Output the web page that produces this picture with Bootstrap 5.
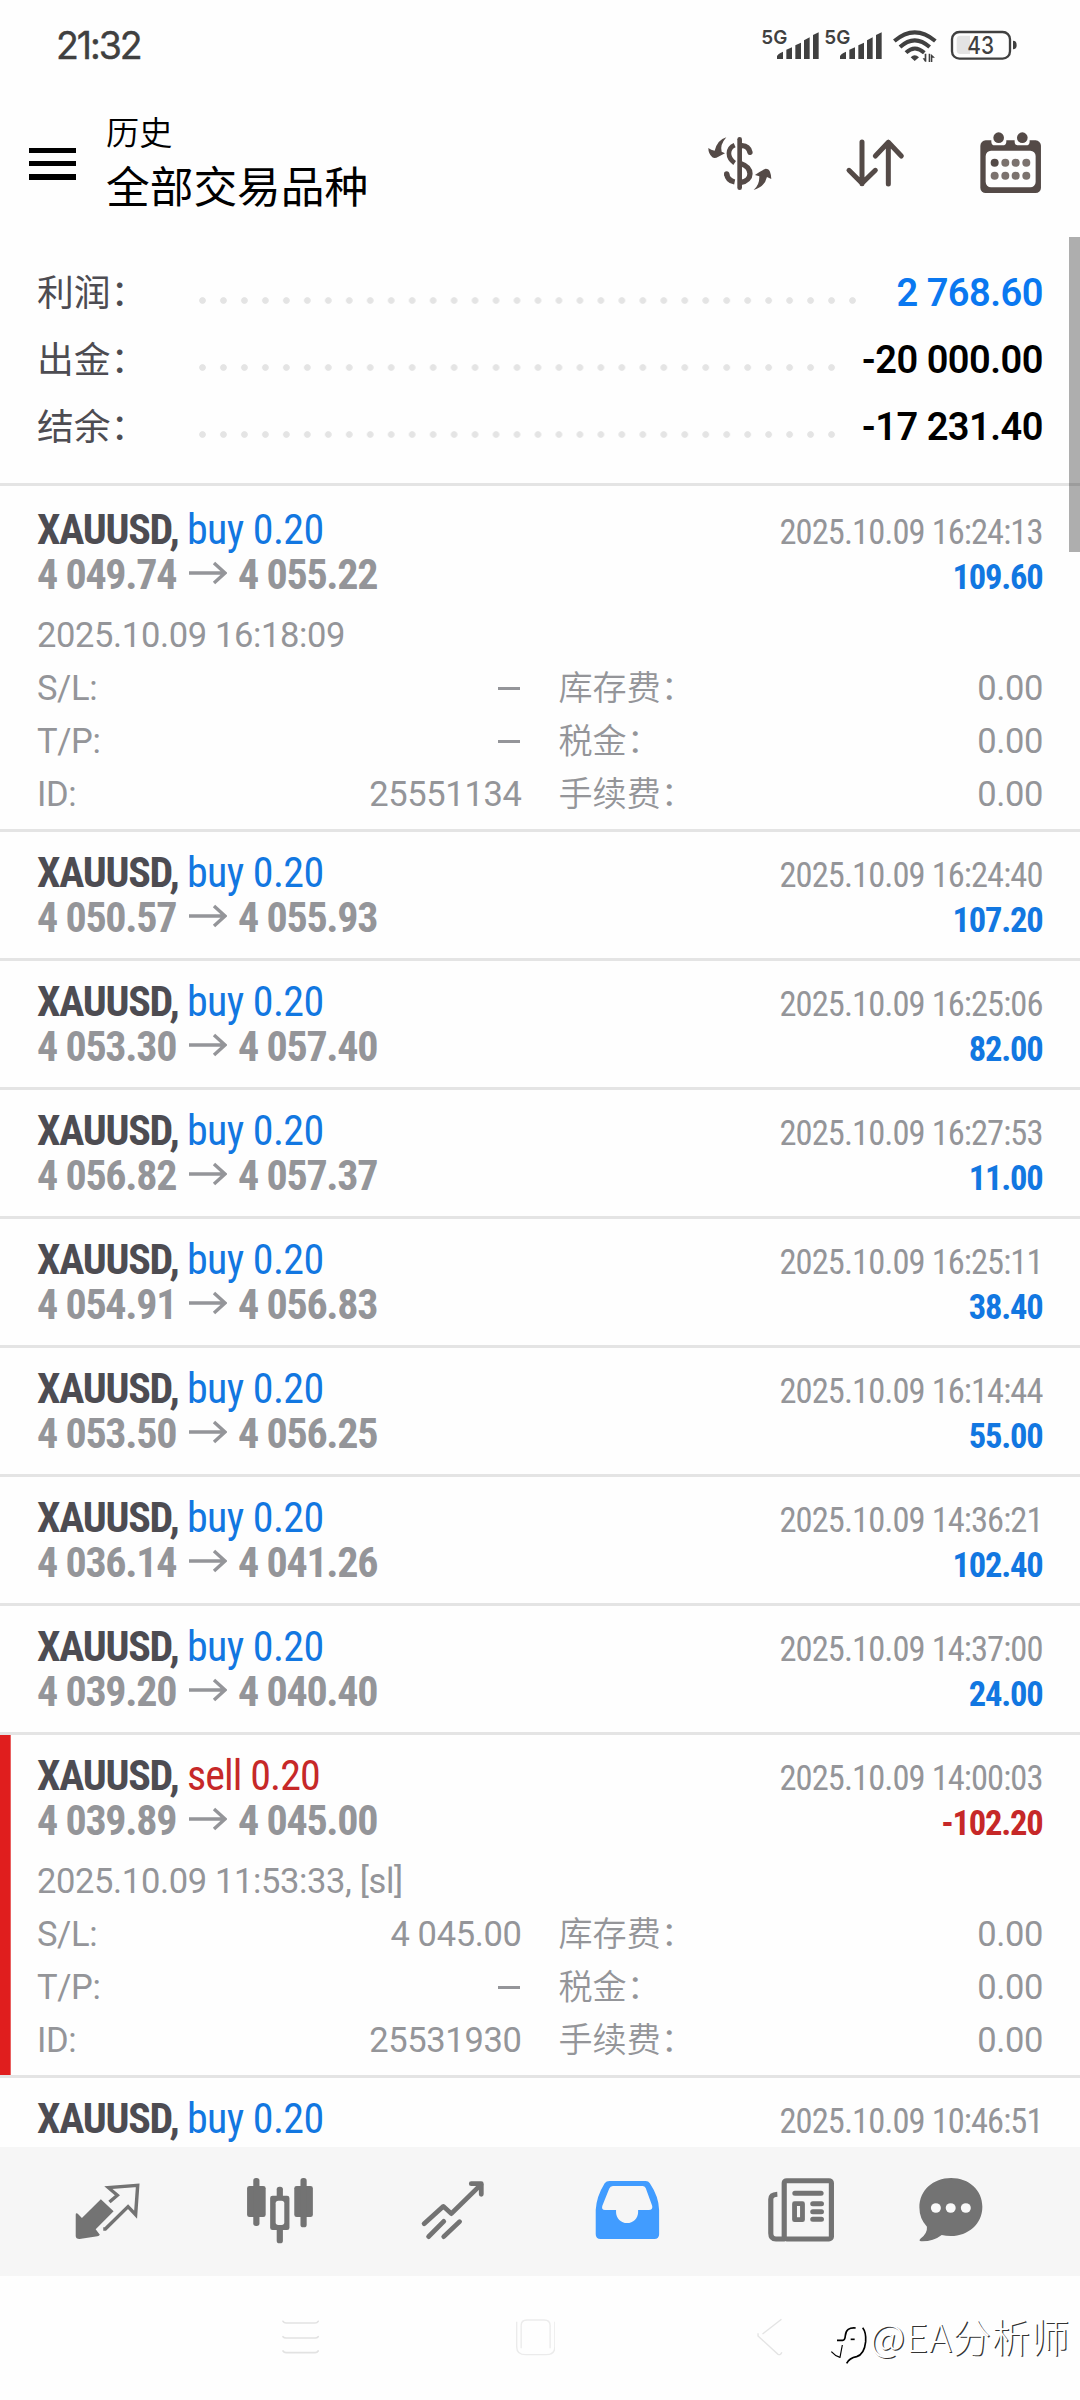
<!DOCTYPE html>
<html lang="zh-CN">
<head>
<meta charset="utf-8">
<meta name="viewport" content="width=device-width, initial-scale=1">
<title>历史</title>
<link rel="stylesheet" href="https://cdn.jsdelivr.net/npm/bootstrap@5.3.0/dist/css/bootstrap.min.css">
<style>
  :root { --ink:#4d4c52; --muted:#949599; --buy:#1277e1; --sell:#c62828; --line:#e4e4e4; }
  body { width:1080px; height:2400px; background:#fefefe; overflow:hidden; color:#000;
         font-family:Roboto,"Noto Sans CJK SC",sans-serif; }
  svg { display:block; flex:none; }
  .statusbar { height:90px; padding:0 56px 0 56px; }
  .clock { font:400 37.5px/93px Inter,sans-serif; letter-spacing:-2.1px; color:#404040; -webkit-text-stroke:.4px #404040; }
  .topbar { height:147px; padding:0 38px 0 29px; }
  .burger { width:47px; height:32px; }
  .burger span { height:5.5px; background:#000; }
  .titles { margin-left:30px; padding-bottom:7px; font-family:"Noto Sans CJK SC",sans-serif; font-weight:400; }
  .title-small { font-size:33.2px; line-height:48px; font-weight:350; }
  .title-main { font-size:43.7px; line-height:59px; }
  .tools { gap:73.3px; }
  .summary { height:249px; padding:23px 37px 0 37px; border-bottom:3px solid var(--line); }
  .sum-line { height:67px; }
  .sum-label { width:155px; font-size:36.8px; color:var(--ink); font-weight:400; }
  .leader { width:651px; height:21px; margin-top:13px; background:radial-gradient(circle at 50% 50%,#e4e4e4 2.9px,transparent 3.7px) 0 0/20.98px 21px repeat-x; }
  .leader-long { width:672px; }
  .sum-value { font-size:38px; font-weight:600; letter-spacing:-.5px; }
  .deals { margin-top:3px; height:1658px; overflow:hidden; }
  .deal { height:129px; padding:18px 37px 0 37px; border-bottom:3px solid var(--line); }
  .deal-open { height:343px; }
  .deal-loss { box-shadow:inset 10.7px 0 0 #e01e1e; }
  .pair { height:45px; line-height:45px; font-family:"Roboto Condensed",Roboto,sans-serif; font-size:42px; color:var(--muted); letter-spacing:-1.25px; }
  .sym { color:var(--ink); font-weight:700; }
  .price { font-weight:700; }
  .arr { width:38px; height:24px; margin:0 11.4px 0 12.4px; display:inline-block; vertical-align:4px; }
  .stamp { font-size:34.5px; letter-spacing:-.93px; margin-right:-.5px; }
  .gain { color:var(--buy); } .loss { color:var(--sell); }
  .pair .gain:not(.stamp) { letter-spacing:-.6px; } .pair .loss:not(.stamp) { letter-spacing:-.9px; }
  .pair .stamp.price { letter-spacing:-1.2px; }
  .pair .stamp { margin-right:.5px; }
  .facts { margin-top:12px; font-size:34.5px; line-height:53px; color:var(--muted); letter-spacing:-.36px; }
  .facts > div { height:53px; }
  .facts .half { width:484.5px; }
  .cjk { font-size:34.1px; font-weight:350; letter-spacing:0; }
  .dash { width:22px; height:2.6px; background:var(--muted); margin-right:1.5px; }
  .thumb { left:1069px; top:237px; width:11px; height:315px; background:rgba(0,0,0,.315); z-index:2; }
  .tabs-bar { height:129px; background:#f6f6f6; padding-left:74.4px; padding-top:28px; color:#737373; }
  .tabs-bar a { color:inherit; }
  .t2,.t3 { margin-left:105px; } .t4 { margin-left:108.6px; } .t5 { margin-left:106.8px; } .t6 { margin-left:82.5px; }
  .sysbar { height:124px; padding:39px 0 0 281.7px; }
  .sys-home { margin-left:197px; } .sys-back { margin-left:202px; }
  .mark-wm { left:820px; top:2305px; z-index:3; }
  .wm-text { margin:-5px 0 0 -36px; font:300 38.4px/70px "Noto Sans CJK SC",sans-serif; color:#fff; text-shadow:1.2px 1.2px 0 #333; white-space:nowrap; letter-spacing:.9px; }
</style>
<script src="https://cdn.jsdelivr.net/npm/bootstrap@5.3.0/dist/js/bootstrap.bundle.min.js"></script>
</head>
<body class="position-relative d-flex flex-column">
<svg width="0" height="0" class="position-absolute">
  <symbol id="to" viewBox="0 0 38 24"><path d="M0 12H36M25 2L36 12L25 22" fill="none" stroke="#949599" stroke-width="3.4"/></symbol>
</svg>

<header>
  <div class="statusbar d-flex align-items-center justify-content-between">
    <div class="clock">21:32</div>
    <svg width="264" height="40" viewBox="300 76 792 120" fill="#404040" font-family="Inter, sans-serif">
      <g id="sig">
        <text x="304" y="132" font-size="58" font-weight="600" textLength="78" lengthAdjust="spacingAndGlyphs">5G</text>
        <path d="M351 178V170Q351 164 369 156V178ZM379 178V150L396 143V178ZM406 178V137L423 129V178ZM432 178V122L449 113V178ZM459 178V106L476 98V178Z"/>
      </g>
      <use href="#sig" x="189"/>
      <g fill="none" stroke="#404040" stroke-width="12">
        <path d="M703 124Q764 72 826 124"/><path d="M720 142Q764 102 809 142"/><path d="M738 159Q764 134 793 159"/>
      </g>
      <path d="M752 173Q764 160 777 173L764 184Z"/>
      <path d="M799 162V186H795L788 176H794V162ZM806 187V162H810V187ZM812 187V162L825 174H817V187Z"/>
      <rect x="876" y="97" width="174" height="80" rx="22" fill="none" stroke="#404040" stroke-width="7"/>
      <path d="M930 108H901Q890 108 890 120V152Q890 163 901 163H930Z" fill="#e3e3e3"/>
      <path d="M1059 123Q1070 123 1070 136Q1070 149 1059 149Z"/>
      <text x="922" y="163" font-size="72" font-weight="500" textLength="80" lengthAdjust="spacingAndGlyphs">43</text>
    </svg>
  </div>
  <div class="topbar d-flex align-items-center">
    <div class="burger d-flex flex-column justify-content-between"><span></span><span></span><span></span></div>
    <div class="titles flex-grow-1">
      <div class="title-small">历史</div>
      <div class="title-main">全部交易品种</div>
    </div>
    <div class="tools d-flex align-items-center">
      <svg width="65.3" height="56.7" viewBox="20 30 196 170" fill="#544a47">
        <rect x="111" y="36" width="14" height="159" rx="7"/>
        <g fill="none" stroke="#544a47" stroke-width="16">
          <path d="M125 62Q145 63 149 82" stroke-linecap="round"/><path d="M122 116C158 128 158 166 122 172"/>
          <path d="M79 147Q82 167 103 171"/><path d="M103 60C80 70 80 98 103 114" stroke-width="14"/>
        </g>
        <circle cx="79" cy="147" r="8"/>
        <path d="M78 37Q52 44 43 77Q32 76 24 69Q24 86 36 97Q44 101 54 95Q64 91 74 85L64 80Q58 60 78 37Z"/>
        <path d="M160 195Q178 180 177 154L164 150Q182 137 196 131Q206 131 209 140Q213 150 213 162L200 156Q194 185 160 195Z"/>
      </svg>
      <svg width="60" height="50" viewBox="556 415 180 150" fill="none" stroke="#544a47" stroke-width="15" stroke-linecap="round" stroke-linejoin="round">
        <path d="M607 427V552M568 512L607 551L647 512M686 553V428M647 469L686 428L725 469"/>
      </svg>
      <svg width="63.3" height="63.3" viewBox="956 395 190 190" fill="#544a47">
        <rect x="960" y="420" width="182" height="158" rx="16"/>
        <rect x="976" y="451" width="150" height="110" rx="16" fill="#fefefe"/>
        <path d="M993 415V424Q993 435 1004 435H1026Q1038 435 1038 424V415ZM1063 415V424Q1063 435 1074 435H1097Q1108 435 1108 424V415Z" fill="#fefefe"/>
        <circle cx="1015" cy="412" r="16"/><circle cx="1086" cy="412" r="16"/>
        <circle cx="1003" cy="487" r="12"/>
        <g fill="#7b726e"><circle cx="1035" cy="487" r="12"/><circle cx="1066" cy="487" r="12"/><circle cx="1098" cy="487" r="12"/><circle cx="1003" cy="526" r="12"/><circle cx="1035" cy="526" r="12"/><circle cx="1066" cy="526" r="12"/><circle cx="1098" cy="526" r="12"/></g>
      </svg>
    </div>
  </div>
</header>

<main>
  <section class="summary">
    <div class="sum-line d-flex align-items-center"><span class="sum-label">利润：</span><span class="leader leader-long"></span><span class="sum-value ms-auto" style="color:#0a78f0">2 768.60</span></div>
    <div class="sum-line d-flex align-items-center"><span class="sum-label">出金：</span><span class="leader"></span><span class="sum-value ms-auto">-20 000.00</span></div>
    <div class="sum-line d-flex align-items-center"><span class="sum-label">结余：</span><span class="leader"></span><span class="sum-value ms-auto">-17 231.40</span></div>
  </section>

  <section class="deals">
    <article class="deal deal-open">
      <div class="pair d-flex justify-content-between align-items-baseline"><span><span class="sym">XAUUSD,</span> <span class="gain">buy 0.20</span></span><span class="stamp">2025.10.09 16:24:13</span></div>
      <div class="pair d-flex justify-content-between align-items-baseline"><span class="price">4 049.74<svg class="arr"><use href="#to"/></svg>4 055.22</span><span class="stamp price gain">109.60</span></div>
      <div class="facts">
        <div>2025.10.09 16:18:09</div>
        <div class="d-flex justify-content-between"><div class="half d-flex justify-content-between align-items-center"><span>S/L:</span><span class="dash"></span></div><div class="half d-flex justify-content-between"><span class="cjk">库存费：</span><span>0.00</span></div></div>
        <div class="d-flex justify-content-between"><div class="half d-flex justify-content-between align-items-center"><span>T/P:</span><span class="dash"></span></div><div class="half d-flex justify-content-between"><span class="cjk">税金：</span><span>0.00</span></div></div>
        <div class="d-flex justify-content-between"><div class="half d-flex justify-content-between"><span>ID:</span><span>25551134</span></div><div class="half d-flex justify-content-between"><span class="cjk">手续费：</span><span>0.00</span></div></div>
      </div>
    </article>
    <article class="deal">
      <div class="pair d-flex justify-content-between align-items-baseline"><span><span class="sym">XAUUSD,</span> <span class="gain">buy 0.20</span></span><span class="stamp">2025.10.09 16:24:40</span></div>
      <div class="pair d-flex justify-content-between align-items-baseline"><span class="price">4 050.57<svg class="arr"><use href="#to"/></svg>4 055.93</span><span class="stamp price gain">107.20</span></div>
    </article>
    <article class="deal">
      <div class="pair d-flex justify-content-between align-items-baseline"><span><span class="sym">XAUUSD,</span> <span class="gain">buy 0.20</span></span><span class="stamp">2025.10.09 16:25:06</span></div>
      <div class="pair d-flex justify-content-between align-items-baseline"><span class="price">4 053.30<svg class="arr"><use href="#to"/></svg>4 057.40</span><span class="stamp price gain">82.00</span></div>
    </article>
    <article class="deal">
      <div class="pair d-flex justify-content-between align-items-baseline"><span><span class="sym">XAUUSD,</span> <span class="gain">buy 0.20</span></span><span class="stamp">2025.10.09 16:27:53</span></div>
      <div class="pair d-flex justify-content-between align-items-baseline"><span class="price">4 056.82<svg class="arr"><use href="#to"/></svg>4 057.37</span><span class="stamp price gain">11.00</span></div>
    </article>
    <article class="deal">
      <div class="pair d-flex justify-content-between align-items-baseline"><span><span class="sym">XAUUSD,</span> <span class="gain">buy 0.20</span></span><span class="stamp">2025.10.09 16:25:11</span></div>
      <div class="pair d-flex justify-content-between align-items-baseline"><span class="price">4 054.91<svg class="arr"><use href="#to"/></svg>4 056.83</span><span class="stamp price gain">38.40</span></div>
    </article>
    <article class="deal">
      <div class="pair d-flex justify-content-between align-items-baseline"><span><span class="sym">XAUUSD,</span> <span class="gain">buy 0.20</span></span><span class="stamp">2025.10.09 16:14:44</span></div>
      <div class="pair d-flex justify-content-between align-items-baseline"><span class="price">4 053.50<svg class="arr"><use href="#to"/></svg>4 056.25</span><span class="stamp price gain">55.00</span></div>
    </article>
    <article class="deal">
      <div class="pair d-flex justify-content-between align-items-baseline"><span><span class="sym">XAUUSD,</span> <span class="gain">buy 0.20</span></span><span class="stamp">2025.10.09 14:36:21</span></div>
      <div class="pair d-flex justify-content-between align-items-baseline"><span class="price">4 036.14<svg class="arr"><use href="#to"/></svg>4 041.26</span><span class="stamp price gain">102.40</span></div>
    </article>
    <article class="deal">
      <div class="pair d-flex justify-content-between align-items-baseline"><span><span class="sym">XAUUSD,</span> <span class="gain">buy 0.20</span></span><span class="stamp">2025.10.09 14:37:00</span></div>
      <div class="pair d-flex justify-content-between align-items-baseline"><span class="price">4 039.20<svg class="arr"><use href="#to"/></svg>4 040.40</span><span class="stamp price gain">24.00</span></div>
    </article>
    <article class="deal deal-open deal-loss">
      <div class="pair d-flex justify-content-between align-items-baseline"><span><span class="sym">XAUUSD,</span> <span class="loss">sell 0.20</span></span><span class="stamp">2025.10.09 14:00:03</span></div>
      <div class="pair d-flex justify-content-between align-items-baseline"><span class="price">4 039.89<svg class="arr"><use href="#to"/></svg>4 045.00</span><span class="stamp price loss">-102.20</span></div>
      <div class="facts">
        <div>2025.10.09 11:53:33, [sl]</div>
        <div class="d-flex justify-content-between"><div class="half d-flex justify-content-between"><span>S/L:</span><span>4 045.00</span></div><div class="half d-flex justify-content-between"><span class="cjk">库存费：</span><span>0.00</span></div></div>
        <div class="d-flex justify-content-between"><div class="half d-flex justify-content-between align-items-center"><span>T/P:</span><span class="dash"></span></div><div class="half d-flex justify-content-between"><span class="cjk">税金：</span><span>0.00</span></div></div>
        <div class="d-flex justify-content-between"><div class="half d-flex justify-content-between"><span>ID:</span><span>25531930</span></div><div class="half d-flex justify-content-between"><span class="cjk">手续费：</span><span>0.00</span></div></div>
      </div>
    </article>
    <article class="deal border-0">
      <div class="pair d-flex justify-content-between align-items-baseline"><span><span class="sym">XAUUSD,</span> <span class="gain">buy 0.20</span></span><span class="stamp">2025.10.09 10:46:51</span></div>
    </article>
  </section>
</main>
<div class="thumb position-absolute"></div>

<nav class="tabs-bar d-flex">
  <a href="#"><svg width="66.1" height="70" viewBox="216 105 192 210" preserveAspectRatio="none" fill="#737373">
    <path d="M294 178L331 214L279 268L291 284Q289 288 284 289L232 297Q221 297 221 288V224Q221 217 227 221L239 234Z"/>
    <path d="M319 186L342 166L316 143L401 136L395 224L373 200L307 267H301" fill="none" stroke="#737373" stroke-width="10"/></svg></a>
  <a href="#" class="t2"><svg width="69.6" height="70" viewBox="712 105 202 210" preserveAspectRatio="none" fill="#737373">
    <rect x="718" y="138" width="54" height="93" rx="7"/><rect x="855" y="138" width="54" height="93" rx="7"/>
    <rect x="736" y="114" width="18" height="144" rx="8"/><rect x="873" y="114" width="18" height="148" rx="8"/>
    <rect x="804" y="140" width="18" height="40" rx="8"/><rect x="804" y="260" width="18" height="50" rx="8"/>
    <rect x="785" y="167" width="56" height="103" rx="7"/><rect x="801" y="182" width="25" height="73" rx="8" fill="#f6f6f6"/></svg></a>
  <a href="#" class="t3"><svg width="65.4" height="70" viewBox="1220 105 190 210" preserveAspectRatio="none" fill="none" stroke="#737373" stroke-width="14" stroke-linecap="round" stroke-linejoin="round">
    <path d="M1232 251L1288 199L1311 221L1397 134"/><path d="M1245 290L1289 244M1289 290L1335 245"/>
    <path d="M1369 131H1398V163"/></svg></a>
  <a href="#" class="t4"><svg width="66.5" height="70" viewBox="157 105 193 210" preserveAspectRatio="none">
    <path d="M202 123H307Q315 123 319 130Q345 170 346 210V283Q346 297 332 297H176Q162 297 162 283V210Q164 170 188 130Q193 123 202 123Z" fill="#419cff"/>
    <path d="M212 138H298Q304 138 307 144L326 198Q328 210 316 210H285V217A32 32 0 0 1 221 217V210H189Q178 210 181 198L201 146Q204 138 212 138Z" fill="#f6f6f6"/></svg></a>
  <a href="#" class="t5"><svg width="68.2" height="70" viewBox="660 105 198 210" preserveAspectRatio="none" fill="none" stroke="#737373" stroke-width="15" stroke-linejoin="round">
    <rect x="710" y="122" width="137" height="175" rx="7"/><path d="M690 163Q671 164 671 178V280Q671 297 686 297H712"/>
    <path d="M741 160H817M793 191H818M793 215H818M793 238H818" stroke-linecap="round"/><rect x="740" y="191" width="23" height="48" stroke-width="14"/></svg></a>
  <a href="#" class="t6"><svg width="65.4" height="70" viewBox="1098 105 190 210" preserveAspectRatio="none" fill="#737373">
    <path d="M1194 114C1247 114 1285 151 1285 200C1285 252 1243 288 1194 288Q1179 288 1167 285Q1142 305 1107 304Q1099 302 1105 296Q1126 280 1124 260Q1102 237 1102 202C1102 151 1142 114 1194 114Z"/>
    <g fill="#f9f9f9"><circle cx="1150" cy="204" r="14.5"/><circle cx="1193" cy="204" r="14.5"/><circle cx="1237" cy="204" r="14.5"/></g></svg></a>
</nav>

<footer class="sysbar d-flex">
  <svg width="37.2" height="42" viewBox="818 525 108 126" preserveAspectRatio="none" fill="none" stroke="#e2e2e2" stroke-width="5" stroke-linecap="round"><path d="M821 544Q824 549 830 549H914Q920 549 923 544M821 590Q824 594 830 594H914Q920 594 923 590M821 633Q824 638 830 638H914Q920 638 923 633"/></svg>
  <svg class="sys-home" width="39.6" height="42" viewBox="1500 525 115 126" preserveAspectRatio="none" fill="none"><path d="M1502 545V620Q1502 644 1528 644H1587Q1613 644 1613 620V545" stroke="#ebebeb" stroke-width="4"/><path d="M1515 625V556Q1515 540 1532 540H1582Q1599 540 1599 556V625" stroke="#ebebeb" stroke-width="4"/></svg>
  <svg class="sys-back" width="25.5" height="42" viewBox="633 525 74 126" preserveAspectRatio="none" fill="none" stroke="#e4e4e4" stroke-width="4"><path d="M704 538L649 582"/><path d="M636 580V588L694 643Q702 646 705 637"/></svg>
</footer>

<div class="mark-wm position-absolute d-flex">
  <svg width="86" height="70" viewBox="0 0 258 210" fill="none" stroke="#000" stroke-width="5"><path d="M128 68Q139 82 137 110Q133 148 110 155Q88 159 80 175"/><path d="M107 69Q78 66 76 92Q75 106 68 106H51"/><path d="M92 103H104"/><path d="M67 120L60 157Q44 152 34 140" stroke-width="3.5"/></svg>
  <span class="wm-text">@EA分析师</span>
</div>
</body>
</html>
